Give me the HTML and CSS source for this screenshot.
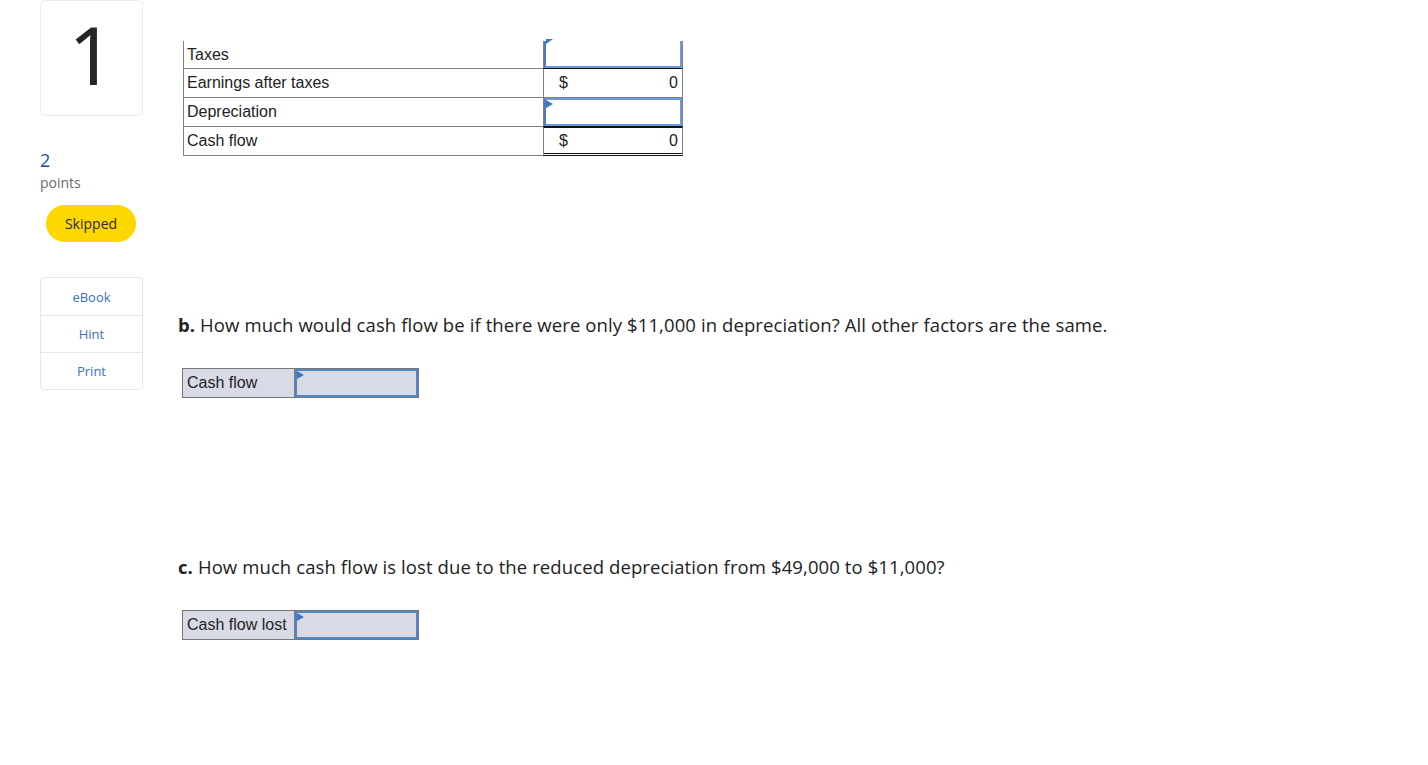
FILE: index.html
```html
<!DOCTYPE html>
<html>
<head>
<meta charset="utf-8">
<link rel="stylesheet" href="styles.css">
</head>
<body>
<div class="page">
  <aside class="side">
    <div class="qnum">1</div>
    <div class="pts-val">2</div>
    <div class="pts-label">points</div>
    <div class="pill">Skipped</div>
    <div class="links">
      <div class="link">eBook</div>
      <div class="link">Hint</div>
      <div class="link">Print</div>
    </div>
  </aside>
  <main class="main">
    <div class="ftable">
      <div class="row r-first">
        <div class="lab">Taxes</div>
        <div class="val"><div class="inp"><span class="flag"></span></div></div>
      </div>
      <div class="row">
        <div class="lab">Earnings after taxes</div>
        <div class="val calc"><span>$</span><span>0</span></div>
      </div>
      <div class="row">
        <div class="lab">Depreciation</div>
        <div class="val"><div class="inp"><span class="flag"></span></div></div>
      </div>
      <div class="row">
        <div class="lab">Cash flow</div>
        <div class="val calc total"><span>$</span><span>0</span></div>
      </div>
    </div>

    <p class="question q-b"><b>b.</b> How much would cash flow be if there were only $11,000 in depreciation? All other factors are the same.</p>
    <div class="answer">
      <div class="a-lab">Cash flow</div>
      <div class="a-inp"><span class="flag"></span></div>
    </div>

    <p class="question q-c"><b>c.</b> How much cash flow is lost due to the reduced depreciation from $49,000 to $11,000?</p>
    <div class="answer">
      <div class="a-lab">Cash flow lost</div>
      <div class="a-inp"><span class="flag"></span></div>
    </div>
  </main>
</div>
</body>
</html>
```
FILE: styles.css
```css
* { box-sizing: border-box; }
html, body { margin: 0; padding: 0; background: #fff; }
body { font-family: "Open Sans", "Liberation Sans", sans-serif; color: #222; }
.page { display: flex; align-items: flex-start; }

.side { width: 103px; margin-left: 40px; display: flex; flex-direction: column; }
.qnum {
  height: 116px; border: 1px solid #ebebeb; border-radius: 6px;
  display: flex; align-items: center; justify-content: center;
  font-family: "Noto Sans", "Open Sans", sans-serif; font-size: 80px; line-height: 1; color: #262626;
  padding-bottom: 8px;
}
.pts-val { margin-top: 34px; font-size: 18px; line-height: 20px; color: #1f4f99; }
.pts-label { font-size: 14px; line-height: 20px; color: #6b6b6b; margin-top: 3px; }
.pill {
  margin: 12px 0 0 6px; width: 90px; height: 37px; border-radius: 19px;
  background: #fdd700; color: #2a2a2a; font-size: 14px;
  display: flex; align-items: center; justify-content: center;
}
.links { margin-top: 35px; border: 1px solid #e6e6e6; border-radius: 4px; }
.link {
  height: 37px; display: flex; align-items: center; justify-content: center;
  font-size: 13px; color: #3a72bd; border-top: 1px solid #e6e6e6;
}
.link:first-child { border-top: 0; }

.main { margin-left: 39px; flex: 1; }
.ftable {
  margin-top: 41px; margin-left: 1px; width: 500px;
  font-family: "Liberation Sans", Arial, sans-serif; font-size: 16px; color: #222;
}
.row { display: grid; grid-template-columns: 360px 140px; height: 29px; }
.row.r-first { height: 28px; }
.lab {
  border-left: 1px solid #808080; border-bottom: 1px solid #808080;
  padding-left: 3px; display: flex; align-items: center;
}
.val {
  border-left: 1px solid #808080; border-right: 1px solid #808080;
  border-bottom: 1px solid #808080; position: relative;
}
.inp {
  position: relative; height: 100%;
  border: 2px solid #6a9ad9; border-left-color: #4a7cc4; background: #fff;
}
.r-first .inp { border-top: 0; }
.calc {
  display: flex; align-items: center; justify-content: space-between;
  padding: 0 4px 0 15px; border-top: 1px solid #111; border-bottom-color: #808080;
}
.row:nth-child(2) .calc { border-top: 0; border-bottom: 1px solid #808080; }
.row:nth-child(1) .val { border-bottom: 1px solid #111; }
.row:nth-child(3) .val { border-bottom: 1px solid #111; }
.total { border-bottom: 3px double #111 !important; }

.flag {
  position: absolute; left: 0; top: 0; width: 0; height: 0;
  border-top: 4px solid transparent; border-bottom: 4px solid transparent;
  border-left: 7px solid #3f77c4;
}
.r-first .flag { top: -2px; border-top: 0; border-bottom: 5px solid transparent; border-left: 7px solid #3f77c4; }

.question {
  margin: 0; font-size: 18.5px; line-height: 24px; color: #222; margin-left: -4px;
  letter-spacing: 0.1px;
}
.question b { font-weight: 700; }
.q-b { margin-top: 157px; }
.q-c { margin-top: 157px; }

.answer {
  display: flex; width: 237px; height: 30px; margin-top: 31px;
  border: 1px solid #777; font-family: "Liberation Sans", Arial, sans-serif; font-size: 16px;
  background: #d8dbe6;
}
.a-lab { width: 112px; border-right: 1px solid #777; padding-left: 4px; display: flex; align-items: center; color: #222; }
.a-inp { position: relative; flex: 1; border: 2px solid #5585c9; background: #d8dbe6; }
```
